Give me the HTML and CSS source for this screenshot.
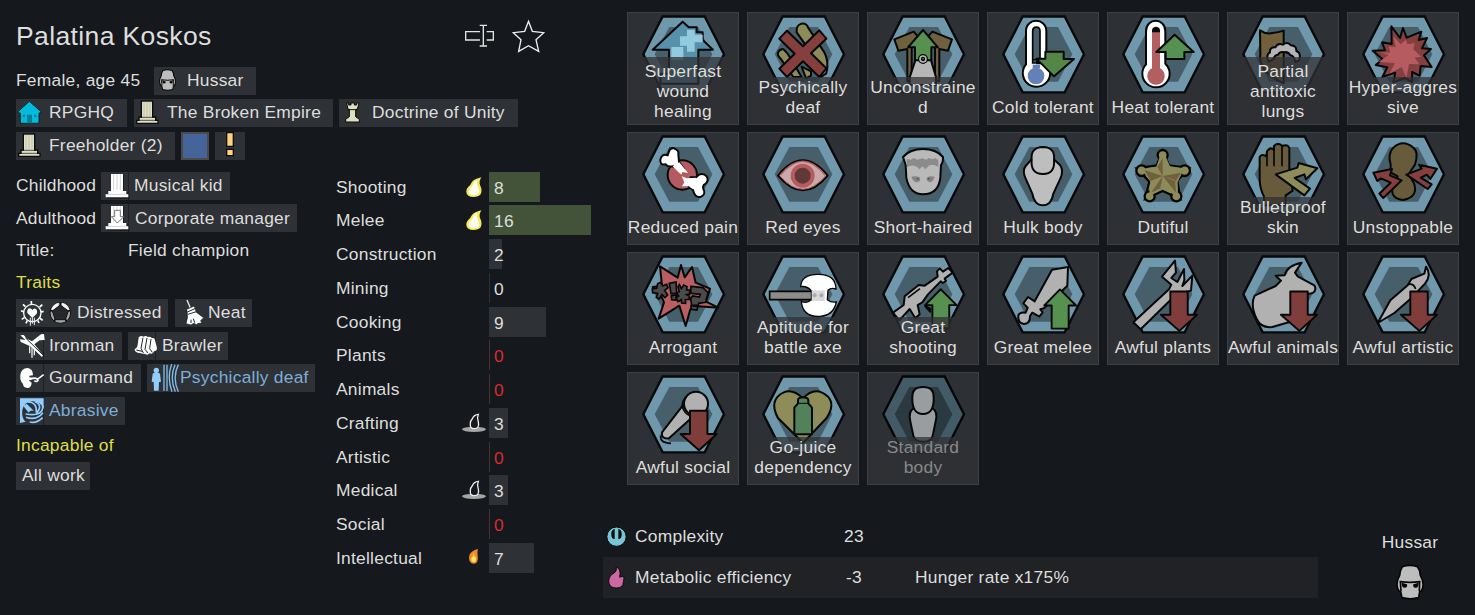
FILE: index.html
```html
<!DOCTYPE html>
<html lang="en">
<head>
<meta charset="utf-8">
<title>Palatina Koskos</title>
<link rel="stylesheet" href="styles.css">
</head>
<body>
<svg class="defs" width="0" height="0">
  <defs>
    <symbol id="hex" viewBox="0 0 336 339">
      <path fill="#6f98ac" stroke="#060809" stroke-width="7" d="M107 13.500H233L291 127L233 241H107L49 127Z"/>
      <path fill="#475f6a" d="M127 45H213L256 127L213 209H127L83 127Z"/>
    </symbol>
    <symbol id="down" viewBox="0 0 130 134"><path class="k" fill="#7f3d3b" d="M35 6H89V78H118L63 128L6 78H35Z"/></symbol>
    <symbol id="up" viewBox="0 0 110 134"><path class="k" fill="#569152" d="M55 6L105 56H82V128H29V56H6Z"/></symbol>
    <symbol id="flame" viewBox="390 21 87 90">
      <path fill="#f7e957" d="M454 37Q446 50 450 60Q458 76 452 88Q445 96 431 96Q409 95 409 80Q409 69 420 61Q427 42 454 37Z"/>
      <path fill="#fffdf0" d="M443 45Q438 54 444 65Q451 79 445 87Q432 94 420 88Q411 78 421 69Q429 62 431 53Q436 46 443 45Z"/>
    </symbol>
    <symbol id="apathy" viewBox="390 99 87 90">
      <ellipse cx="432" cy="163" rx="36" ry="8" fill="#a5a5a5"/>
      <path fill="#15191d" stroke="#eee" stroke-width="4" d="M445 118Q440 130 445 141Q449 161 433 161Q419 161 421 145Q421 137 427 131Q432 119 445 118Z"/>
    </symbol>
    <symbol id="pillar" viewBox="0 0 72 72">
      <path fill="#dfe0c4" stroke="#090a0b" stroke-width="4" d="M17 2H51V50H60V60H67V69H3V60H10V50H17Z"/>
      <path stroke="#b9baa3" stroke-width="2.500" d="M25 4V49M34 4V49M43 4V49"/>
      <path stroke="#090a0b" stroke-width="2" d="M13 51H57M8 60H62"/>
    </symbol>
    <symbol id="whitepillar" viewBox="0 0 76 78">
      <path fill="#151515" opacity=".7" d="M20 3H57V56H68V64H74V77H6V66H14V56H20Z"/>
      <path fill="#fff" d="M18 3H54V54H64V64H70V73H2V64H10V54H18Z"/>
      <path stroke="#bbb" stroke-width="2" d="M26 4V50M36 4V50M46 4V50M10 64H64"/>
    </symbol>
    <symbol id="helmet" viewBox="168 163 90 108">
      <path fill="#bdbdbd" stroke="#060606" stroke-width="5" d="M190 171Q213 163 235 171Q243 180 244 197Q259 223 247 244L242 246L239 264Q214 271 189 264L185 246L180 244Q167 223 182 197Q183 181 190 171Z"/>
      <path fill="none" stroke="#060606" stroke-width="5" d="M186 244L184 216Q213 220 242 216L241 244"/>
      <path fill="#060606" d="M188 219L204 224Q207 235 195 234Q188 232 188 219ZM239 219L223 224Q220 235 232 234Q239 232 239 219Z"/>
    </symbol>
  </defs>
</svg>

<main class="sheet">
  <section class="bio">
    <header class="name-row">
      <h1>Palatina Koskos</h1>
      <svg class="rename" viewBox="402 66 93 75"><g fill="none" stroke="#e4e4e0" stroke-width="4"><path d="M450 92H407V117H450M470 92H490V117H470M460 73V135M449 73H471M449 135H471"/></g></svg>
      <svg class="star" viewBox="543 57 105 105"><path fill="none" stroke="#eee" stroke-width="4" d="M595.500 64L607 94L641 98L618 119L626 154L595.500 137L566 154L573 119L550 98L584 94Z"/></svg>
    </header>

    <div class="row"><span class="plain age">Female, age 45</span>
      <span class="chip w102"><svg class="ic33" viewBox="0 0 99 84"><use href="#helmet" x="13" y="6" width="55" height="66"/></svg>Hussar</span></div>
    <div class="row r2">
      <span class="chip w111"><svg class="ic33" viewBox="48 297 99 84">
        <path fill="#00bbdb" stroke="#06282e" stroke-width="3" d="M88 304L122 334V339H117V370H61V339H55V334Z"/><path fill="#087f94" d="M81 344H96V370H81ZM68 344H75V351H68ZM102 344H109V351H102Z"/></svg>RPGHQ</span>
      <span class="chip w199 gap1"><svg class="ic33" viewBox="0 0 99 84"><use href="#pillar" x="5" y="4" width="72" height="72"/></svg>The Broken Empire</span>
      <span class="chip w179"><svg class="ic33" viewBox="27 297 99 84"><path fill="#dfe0c0" stroke="#090a0b" stroke-width="3" d="M50 309H56V315H63V309H73V315H80V309H87L82 328H77V350L88 358V366H47V358L58 350V328H54Z"/><path stroke="#111" stroke-width="3" d="M53 329H83"/></svg>Doctrine of Unity</span>
    </div>
    <div class="row r3">
      <span class="chip w159"><svg class="ic33" viewBox="0 0 99 84"><use href="#pillar" x="5" y="4" width="72" height="72"/></svg>Freeholder (2)</span>
      <span class="swatch"></span>
      <span class="chip w30"><svg class="ic30" viewBox="645 396 90 84"><path fill="#ffd27b" stroke="#0c0c0c" stroke-width="4" d="M680 398H700V439H680ZM680 448H700V467H680Z"/></svg></span>
    </div>

    <div class="columns">
      <div class="left">
        <div class="row story"><span class="plain key">Childhood</span><span class="chip w129 seam"><svg class="ic33" viewBox="303 21 99 84"><use href="#whitepillar" x="315" y="24" width="76" height="78"/></svg>Musical kid</span></div>
        <div class="row story low"><span class="plain key">Adulthood</span><span class="chip w196 seam"><svg class="ic34" viewBox="303 117 102 84"><use href="#whitepillar" x="315" y="120" width="76" height="78"/><path fill="#fff" stroke="#777" stroke-width="3" d="M344 136H361V155H371L352 174L334 155H344Z"/></svg>Corporate manager</span></div>
        <div class="title-row"><span>Title:</span><span>Field champion</span></div>
        <h2>Traits</h2>
        <div class="row traits">
          <span class="chip w152"><svg class="ic61" viewBox="48 402 183 84">
            <circle cx="97" cy="444" r="26" fill="none" stroke="#fff" stroke-width="4"/>
            <path stroke="#fff" stroke-width="5" d="M94 418V408M76 425L69 418M71 440L63 437M73 458L65 463M119 426L127 419M123 441L131 439M119 459L128 466M82 466L78 475M113 466L117 474"/>
            <path fill="#fff" d="M97 459L82 444Q80 430 90 430Q96 431 97 436Q99 430 106 431Q114 435 110 446Z"/><path stroke="#eee" stroke-width="3" d="M91 458V482M97 458V476M103 458V480"/>
            <circle cx="181" cy="444" r="31" fill="#a2a2a2" stroke="#111" stroke-width="3"/>
            <path fill="#f4f4f4" d="M153 434Q159 416 177 413L175 424L160 437ZM185 413Q203 416 209 434L202 437L187 424Z"/>
            <path fill="#25282c" stroke="#111" stroke-width="3" d="M181 420L205 438L196 464H166L157 438Z"/>
            <path stroke="#111" stroke-width="5" d="M181 412V422M204 438L211 436M196 463L200 469M166 463L162 469M158 438L151 436"/></svg>Distressed</span>
          <span class="chip w77"><svg class="ic33" viewBox="525 402 99 84"><path stroke="#eee" stroke-width="4" d="M561 405L571 429"/><path fill="#fff" stroke="#16181a" stroke-width="2" d="M560 433L583 423L589 442L611 458L602 467L606 475L594 475L590 479L581 475L573 480L558 476Q566 456 560 433Z"/><path stroke="#24272b" stroke-width="3" d="M562 441L587 430M564 448L589 440M573 474V464M584 473L580 461"/></svg>Neat</span>
        </div>
        <div class="row r3">
          <span class="chip w106 seam"><svg class="ic33" viewBox="48 21 99 84"><path fill="#fff" d="M61 31L71 30L82 42L96 49L123 28L132 27L134 45L119 46L103 58L129 90L126 96L91 64L62 51L60 43L76 45Z"/><path stroke="#25282c" stroke-width="3" d="M76 38L129 90"/><path stroke="#eee" stroke-width="4" d="M89 64V85M96 67V98M103 72V91"/></svg>Ironman</span>
          <span class="chip w100 seam"><svg class="ic34" viewBox="384 21 102 84"><path fill="#fff" d="M416 37Q424 30 430 35Q438 30 443 36Q450 33 455 39Q465 37 465 46L471 69Q470 79 462 79Q459 89 449 85Q443 92 435 87L417 84Q404 82 404 72Q411 70 413 59Z"/><path fill="none" stroke="#24272b" stroke-width="3" d="M429 38L423 70L430 84M441 39L435 73L444 84M453 42L449 71L457 82M409 75L426 79"/></svg>Brawler</span>
        </div>
        <div class="row r2">
          <span class="chip w125 seam"><svg class="ic33" viewBox="48 117 99 84"><path fill="#fff" d="M83 129Q99 131 99 151L88 152V157L101 158Q96 166 86 166L95 173Q94 189 82 189Q69 187 69 177Q59 168 61 150Q63 130 83 129Z"/><path fill="none" stroke="#fff" stroke-width="5" d="M96 161Q109 157 112 163L131 149M103 167Q111 173 115 164"/></svg>Gourmand</span>
          <span class="chip w168 blue"><svg class="ic33" viewBox="441 117 99 84"><g fill="#91cdff"><circle cx="469" cy="136" r="8"/><path d="M458 146Q469 138 480 146L483 170L477 171L476 197H462L461 171L455 170Z"/></g><path fill="none" stroke="#83bce9" stroke-width="4" d="M492 119V198M501 119V198M515 117Q500 158 516 200M525 119Q508 158 526 200M535 119Q516 158 535 200"/></svg>Psychically deaf</span>
        </div>
        <div class="row r3"><span class="chip w109 blue seam"><svg class="ic33" viewBox="48 216 99 84"><path fill="#91cdff" d="M60 220H131V252Q123 231 98 229Q73 230 67 254Q64 280 77 290L60 294Z"/><path fill="#91cdff" d="M70 243L80 236L102 258Q92 253 86 263Z"/><path fill="none" stroke="#91cdff" stroke-width="5" d="M84 231Q111 231 109 262M105 230Q131 241 108 266M128 240Q132 276 77 267M129 263Q109 288 78 277M128 278Q110 296 89 291"/></svg>Abrasive</span></div>
        <h2 class="incap">Incapable of</h2>
        <div class="row work"><span class="chip w74 textonly">All work</span></div>
      </div>

      <div class="skills">
        <div class="skill"><span>Shooting</span><svg viewBox="0 0 87 90"><use href="#flame" width="87" height="90"/></svg><b class="bar green" style="width:51px">8</b></div>
        <div class="skill"><span>Melee</span><svg viewBox="0 0 87 90"><use href="#flame" width="87" height="90"/></svg><b class="bar green" style="width:102px">16</b></div>
        <div class="skill"><span>Construction</span><i></i><b class="bar" style="width:13px">2</b></div>
        <div class="skill"><span>Mining</span><i></i><b class="bar" style="width:1px">0</b></div>
        <div class="skill"><span>Cooking</span><i></i><b class="bar" style="width:57px">9</b></div>
        <div class="skill"><span>Plants</span><i></i><b class="bar none" style="width:1px">0</b></div>
        <div class="skill"><span>Animals</span><i></i><b class="bar none" style="width:1px">0</b></div>
        <div class="skill"><span>Crafting</span><svg viewBox="0 0 87 90"><use href="#apathy" width="87" height="90"/></svg><b class="bar" style="width:19px">3</b></div>
        <div class="skill"><span>Artistic</span><i></i><b class="bar none" style="width:1px">0</b></div>
        <div class="skill"><span>Medical</span><svg viewBox="0 0 87 90"><use href="#apathy" width="87" height="90"/></svg><b class="bar" style="width:19px">3</b></div>
        <div class="skill"><span>Social</span><i></i><b class="bar none" style="width:1px">0</b></div>
        <div class="skill"><span>Intellectual</span><svg viewBox="390 504 87 90"><path fill="#f08a2c" d="M444 522Q441 530 443 542Q446 566 431 566Q417 566 417 547Q417 536 425 531Q434 523 444 522Z"/><path fill="#ffe65c" d="M432 533Q431 543 438 549Q439 562 431 562Q423 561 424 550Q430 544 432 533Z"/></svg><b class="bar" style="width:45px">7</b></div>
      </div>
    </div>
  </section>

  <section class="xeno">
    <div class="genes">
      <div class="gene tall"><svg viewBox="21 21 336 339"><use href="#hex" x="21" y="21" width="336" height="339"/>
        <path class="k" fill="#5690ab" d="M188 50L206 67H230V82H248V105L279 134H235V236H121V206H147V134H98Z"/><path fill="#93cade" d="M201 74H224V89H248V112H224V140H201V122H180V94H201ZM154 126H190V165H154Z"/></svg><p>Superfast<br>wound<br>healing</p></div>

      <div class="gene"><svg viewBox="381 21 336 339"><use href="#hex" x="381" y="21" width="336" height="339"/>
        <g class="k" fill="#8d8b59"><path d="M544 56Q559 53 564 67L613 142Q628 170 619 205L603 216L577 148L530 82Q527 62 544 56Z"/><path d="M491 133Q479 130 474 143Q471 151 482 161L520 216H545L502 145Z"/><path d="M545 185L573 199V212L558 220Z"/></g>
        <path class="k" fill="#853f3e" d="M501 77L549 124L598 76L619 101L573 145L619 190L598 216L549 169L501 216L478 191L524 146L478 101Z"/></svg><p>Psychically<br>deaf</p></div>

      <div class="gene"><svg viewBox="741 21 336 339"><use href="#hex" x="741" y="21" width="336" height="339"/>
        <path class="k" fill="#70603e" d="M823 103L881 80L894 94L875 130V229H862V132L835 137ZM996 103L937 80L924 94L945 130V229H958V132L984 137Z"/>
        <path class="k" fill="#569152" d="M909 75L954 127H934V172H885V127H864Z"/><path class="k" fill="#b6b6b6" d="M886 166H933L948 217V240H869V217Z"/><circle cx="909" cy="162" r="9" fill="none" stroke="#050505" stroke-width="12"/><circle cx="909" cy="162" r="9" fill="none" stroke="#b6b6b6" stroke-width="5"/></svg><p>Unconstraine<br>d</p></div>

      <div class="gene"><svg viewBox="21 21 336 339"><use href="#hex" x="21" y="21" width="336" height="339"/>
        <path fill="#fff" stroke="#050505" stroke-width="6" d="M138 178V79C138 37 199 37 199 79V176A41 41 0 1 1 138 178Z"/><path fill="#475f6a" stroke="#050505" stroke-width="5" d="M158 174V79C158 62 180 62 180 79V174Z"/><path d="M168 161H181L198 178H168Z"/><circle cx="168" cy="213" r="25" fill="#6380b8"/><path d="M158 179H180V190H158Z" fill="#6380b8"/><path d="M159 164H186" stroke="#050505" stroke-width="4"/>
        <path class="k" fill="#548747" d="M196 140H251V162H282L222 214L169 161H196Z"/></svg><p>Cold tolerant</p></div>

      <div class="gene"><svg viewBox="381 21 336 339"><use href="#hex" x="381" y="21" width="336" height="339"/>
        <path fill="#fff" stroke="#050505" stroke-width="6" d="M498 178V79C498 37 556 37 556 79V176A41 41 0 1 1 498 178Z"/><path fill="#b35e61" d="M516 81H540V190A26 26 0 1 1 516 190Z"/><path fill="#090909" d="M516 82V76C516 62 540 62 540 76V82Z"/><path class="k" fill="#569152" d="M584 89L641 141H613V162H557V141H529Z"/></svg><p>Heat tolerant</p></div>

      <div class="gene tall"><svg viewBox="741 21 336 339"><use href="#hex" x="741" y="21" width="336" height="339"/>
        <path class="k" fill="#70603e" d="M840 76Q859 89 877 84Q895 82 911 77V235Q882 223 858 199Q837 179 841 147Z"/>
        <path class="k" fill="#b5b5b5" d="M866 170Q856 150 870 142Q868 126 886 127Q893 112 909 119Q922 108 933 121Q950 122 949 138Q965 144 957 166L946 171Q942 152 931 151Q924 139 912 142Q900 139 894 149Q883 150 881 162Z"/></svg><p>Partial<br>antitoxic<br>lungs</p></div>

      <div class="gene"><svg viewBox="1101 21 336 339"><use href="#hex" x="1101" y="21" width="336" height="339"/>
        <path class="k" fill="#853f3e" d="M1234 64L1260 99L1269 69L1280 98L1324 80L1316 105L1341 99L1326 130L1353 132L1332 151L1355 186L1322 183L1319 212L1296 201L1297 232L1274 219L1240 232L1246 203L1207 216L1222 187L1187 180L1208 163L1178 137L1215 136L1206 112L1235 117Z"/><path fill="#b65c60" d="M1239 93L1262 118L1278 104L1282 118L1304 114L1300 133L1324 155L1304 158L1318 178L1287 177L1279 218L1265 186L1228 206L1245 174L1196 171L1226 150L1199 142L1231 143L1226 124L1248 127Z"/></svg><p>Hyper-aggres<br>sive</p></div>

      <div class="gene"><svg viewBox="21 381 336 339"><use href="#hex" x="21" y="381" width="336" height="339"/>
        <circle cx="187" cy="510" r="44" fill="#b35b61" stroke="#080808" stroke-width="6"/><path fill="#fff" stroke="#080808" stroke-width="6" d="M147 439Q151 427 162 430Q178 436 175 448L177 471L190 489L158 484Q144 487 137 478Q119 481 121 464Q125 445 143 451Z"/><path fill="#fff" stroke="#080808" stroke-width="6" d="M237 509Q251 504 260 514Q268 527 255 538Q247 540 250 552Q259 567 243 575Q224 580 219 555L205 543L212 517L228 517Z"/>
        <path fill="#fff" d="M158 484L178 472L204 504L187 501L184 509L172 498ZM228 518L219 553L206 544H186L193 532L185 514L200 520Z"/></svg><p>Reduced pain</p></div>

      <div class="gene"><svg viewBox="381 381 336 339"><use href="#hex" x="381" y="381" width="336" height="339"/>
        <path class="k" fill="#c8aaaa" d="M474 512Q549 420 623 512Q549 600 474 512Z"/><path fill="none" stroke="#b65d60" stroke-width="5" d="M481 510Q549 427 616 511"/><path fill="none" stroke="#b65d60" stroke-width="3" d="M481 514Q549 592 616 513"/><circle cx="548" cy="512" r="30" fill="#603838" stroke="#b65b60" stroke-width="12"/></svg><p>Red eyes</p></div>

      <div class="gene"><svg viewBox="741 381 336 339"><use href="#hex" x="741" y="381" width="336" height="339"/>
        <path class="k" fill="#b9b9b9" d="M849 456Q870 432 909 432Q948 432 969 456Q969 474 963 480L961 518Q956 568 909 568Q868 568 859 518L857 480Z"/><path fill="#8b8b8b" d="M860 462L873 464L881 459L892 464L907 460L918 464L927 459L937 463L946 459L955 466V486Q939 475 928 481L916 493L907 484L898 493Q884 475 861 486Z"/><path fill="#848484" d="M874 515Q888 511 899 517Q905 530 889 532Q879 529 874 515ZM944 515Q930 511 922 517Q915 529 930 532Q940 529 944 515Z"/><circle cx="893" cy="521" r="3" fill="#555"/><circle cx="926" cy="521" r="3" fill="#555"/></svg><p>Short-haired</p></div>

      <div class="gene"><svg viewBox="21 381 336 339"><use href="#hex" x="21" y="381" width="336" height="339"/>
        <path class="k" fill="#bebebe" d="M154 464L137 483Q126 496 137 521L157 566Q163 601 189 601Q214 601 220 566L241 521Q252 497 240 480L223 464Z"/><path class="k" fill="#bebebe" d="M155 464Q151 427 189 426Q226 427 222 464Q226 507 189 507Q151 507 155 464Z"/></svg><p>Hulk body</p></div>

      <div class="gene"><svg viewBox="381 381 336 339"><use href="#hex" x="381" y="381" width="336" height="339"/>
        <g fill="#8d8b59" stroke="#050505" stroke-width="7"><path d="M548 438L567 481L627 489L592 527L601 582L548 558L495 582L508 530L470 490L530 481Z"/><circle cx="548" cy="450" r="15"/><circle cx="485" cy="497" r="16"/><circle cx="614" cy="497" r="16"/><circle cx="509" cy="574" r="15"/><circle cx="589" cy="574" r="15"/></g><path fill="#8d8b59" d="M541 450H555L570 484L613 490L593 531L594 575L548 551L507 575L511 529L483 492L529 485Z"/><path fill="#70603e" d="M548 460V513L532 486ZM494 496L548 513L512 528ZM548 513L513 563L541 550ZM548 513L588 563L585 525ZM548 513L603 503L587 529Z"/></svg><p>Dutiful</p></div>

      <div class="gene"><svg viewBox="741 381 336 339"><use href="#hex" x="741" y="381" width="336" height="339"/>
        <path class="k" fill="#675b3b" d="M852 601V575Q839 549 839 522V456Q845 445 859 454L861 439Q869 425 882 435V423Q894 409 907 423Q924 416 928 430V498L938 557L917 571V601Z"/><path fill="none" stroke="#080808" stroke-width="5" d="M861 446V484M882 431V484M906 424V484"/><path class="k" fill="#8e8c5a" d="M887 508L952 488L956 474L1012 490L978 523L973 508L944 519L990 551L973 571Z"/></svg><p>Bulletproof<br>skin</p></div>

      <div class="gene"><svg viewBox="1101 381 336 339"><use href="#hex" x="1101" y="381" width="336" height="339"/>
        <path class="k" fill="#675b3b" d="M1240 428Q1269 402 1300 428Q1317 441 1305 479L1286 507L1302 535Q1316 576 1270 585Q1229 582 1238 542L1253 514L1232 502V479Q1222 447 1240 428Z"/><path class="k" fill="#853f3e" d="M1180 503L1236 492L1230 511L1265 526L1210 579L1198 566L1232 533L1203 520L1192 528Z"/><path class="k" fill="#853f3e" d="M1279 509L1325 491L1317 479L1371 491L1351 522L1341 509L1322 518L1355 538L1343 552Z"/></svg><p>Unstoppable</p></div>

      <div class="gene"><svg viewBox="21 21 336 339"><use href="#hex" x="21" y="21" width="336" height="339"/>
        <path class="k" fill="#b95e61" d="M120 64L173 98L183 60L194 97L216 66L227 113L270 131L258 170L295 188L235 184L211 193L197 243L178 182L116 221L132 172L120 145L98 126L126 122Z"/><g fill="#4b4b4b" stroke="#070707" stroke-width="5"><path d="M113 116L122 112L128 122L140 118L144 128L134 136L143 150L135 158L126 149L117 162L109 157L113 145L98 143L97 132L110 130ZM148 115L168 111L170 145L153 146ZM154 152L170 150L168 165L155 164Z"/><path d="M178 119L184 131L191 120L201 125L200 135H209V147L200 149L208 153V163L196 164L197 175L185 174L184 164L174 170L168 158L176 153L170 145L178 139L174 125ZM213 124L249 128L264 143L257 172L236 175L235 181L215 180L212 160L218 153L238 156L241 148L212 145ZM213 182L233 184L231 195L213 193Z"/></g></svg><p>Arrogant</p></div>

      <div class="gene"><svg viewBox="381 21 336 339"><use href="#hex" x="381" y="21" width="336" height="339"/>
        <path fill="#fff" stroke="#060606" stroke-width="4" d="M542 125Q544 87 596 88Q647 88 648 132Q633 127 624 136L622 164Q633 173 649 171Q641 211 601 214Q548 217 544 169Q563 177 573 164V136Q560 122 542 125Z"/><path fill="#8e8c8b" stroke="#050505" stroke-width="5" d="M449 139H575V164H449Z"/><path fill="#d9d9d9" d="M575 136H614V168H575Z"/><circle cx="584" cy="151" r="6" fill="#aaa"/><circle cx="604" cy="151" r="6" fill="#aaa"/></svg><p>Aptitude for<br>battle axe</p></div>

      <div class="gene"><svg viewBox="741 21 336 339"><use href="#hex" x="741" y="21" width="336" height="339"/>
        <path class="k" fill="#b1b1b1" d="M819 203L851 180L854 154L896 120L914 122L953 95L951 79L959 70L969 80L985 69L998 83L974 101L978 108L968 114L962 109L924 148L907 172L893 180L899 208L886 220L869 192L838 226Z"/><path d="M864 158L900 131" stroke="#080808" stroke-width="5"/><path class="k" d="M916 184L930 190V200Z" fill="#b1b1b1"/><use href="#up" x="907" y="127" width="110" height="128"/></svg><p>Great<br>shooting</p></div>

      <div class="gene"><svg viewBox="21 21 336 339"><use href="#hex" x="21" y="21" width="336" height="339"/>
        <path class="k" fill="#b1b1b1" d="M216 74L264 66L262 122L192 190L181 193L188 202L178 215L157 203L150 213Q151 236 132 237Q112 234 115 211Q119 200 137 203L143 188L130 175L144 156L164 169Z"/><use href="#up" x="187" y="125" width="106" height="134"/></svg><p>Great melee</p></div>

      <div class="gene"><svg viewBox="381 21 336 339"><use href="#hex" x="381" y="21" width="336" height="339"/>
        <path class="k" fill="#b1b1b1" d="M460 232L567 133L574 119L546 95L585 47L588 83L574 99L592 111L612 72L613 105L607 123L637 92L633 137L590 147L482 253Z"/><use href="#down" x="537" y="133" width="126" height="131"/></svg><p>Awful plants</p></div>

      <div class="gene"><svg viewBox="741 21 336 339"><use href="#hex" x="741" y="21" width="336" height="339"/>
        <path class="k" fill="#b1b1b1" d="M824 152L887 123L903 107L887 92L914 91Q921 61 965 53L945 83L953 94L1003 121Q1011 136 998 144L970 151L955 210L929 231L877 246Q843 250 830 222Q810 180 824 152Z"/><use href="#down" x="897" y="133" width="126" height="131"/></svg><p>Awful animals</p></div>

      <div class="gene"><svg viewBox="1101 21 336 339"><use href="#hex" x="1101" y="21" width="336" height="339"/>
        <path class="k" fill="#b1b1b1" d="M1193 234L1231 166L1283 121L1294 102L1333 86L1338 65Q1356 90 1335 116L1315 137L1304 151L1243 204Z"/><path d="M1286 118Q1301 115 1307 132" fill="none" stroke="#070707" stroke-width="5"/><use href="#down" x="1257" y="133" width="126" height="131"/></svg><p>Awful artistic</p></div>

      <div class="gene"><svg viewBox="21 381 336 339"><use href="#hex" x="21" y="381" width="336" height="339"/>
        <path class="k" fill="#b1b1b1" d="M188 482L126 562Q122 583 147 580L220 514Z"/><circle class="k" cx="228" cy="476" r="36" fill="#b1b1b1"/><path d="M198 456Q181 475 189 491Q201 516 218 510" fill="none" stroke="#070707" stroke-width="5"/><path d="M122 572Q119 594 153 595" fill="none" stroke="#070707" stroke-width="5"/><use href="#down" x="176" y="491" width="126" height="131"/></svg><p>Awful social</p></div>

      <div class="gene"><svg viewBox="381 381 336 339"><use href="#hex" x="381" y="381" width="336" height="339"/>
        <path class="k" fill="#8e8c59" d="M549 594L474 519Q452 479 473 455Q508 420 549 460Q586 420 624 455Q646 479 620 519Z"/><path class="k" fill="#52815a" d="M534 465Q535 457 549 457Q564 457 565 465V475L576 488V568H523V488L534 475Z"/><path stroke="#070707" stroke-width="3" d="M535 475H564"/></svg><p>Go-juice<br>dependency</p></div>

      <div class="gene off"><svg viewBox="741 381 336 339"><g class="dim"><use href="#hex" x="741" y="381" width="336" height="339"/></g>
        <path class="k" fill="#999d9f" d="M882 489Q864 499 871 529L880 572Q885 590 909 590Q934 590 938 572L947 529Q955 500 936 489Z"/><path class="k" fill="#999d9f" d="M877 456Q876 426 909 426Q942 426 941 456Q943 507 909 507Q875 507 877 456Z"/></svg><p>Standard<br>body</p></div>
    </div>

    <footer class="summary">
      <div class="stats">
        <div class="stat"><svg viewBox="33 107 63 67"><circle cx="64.500" cy="141" r="29" fill="#79c5d6" stroke="#090a0b" stroke-width="3"/><path fill="#0c1113" d="M59 117Q47 121 49 137Q50 149 59 148ZM70 117Q82 121 80 137Q79 149 70 148Z"/></svg><span>Complexity</span><span class="val">23</span><span></span></div>
        <div class="stat shaded"><svg viewBox="33 228 63 72"><path fill="#cc67a2" stroke="#080808" stroke-width="3" d="M64 230L74 240Q78 251 74 263L86 260Q90 264 86 277Q86 297 64 297Q40 297 40 274Q42 257 57 250Q66 245 64 230Z"/></svg><span>Metabolic efficiency</span><span class="val">-3</span><span>Hunger rate x175%</span></div>
      </div>
      <div class="type"><span>Hussar</span><svg viewBox="168 163 90 108"><use href="#helmet" x="168" y="163" width="90" height="108"/></svg></div>
    </footer>
  </section>
</main>
</body>
</html>
```
FILE: styles.css
```css
* { box-sizing: border-box; }
body {
  margin: 0;
  background: #15191d;
  color: #dededc;
  font: 17.4px/20px "Liberation Sans", Arial, sans-serif;
  letter-spacing: .25px;
}
svg { display: block; flex: none; }
.defs { position: absolute; }
.k { stroke: #060707; stroke-width: 6; stroke-linejoin: round; }
h1, h2, p { margin: 0; font-weight: normal; }
h2 { font-size: 17.4px; line-height: 20px; color: #dede45; }

.sheet { display: flex; width: 1475px; height: 615px; overflow: hidden; }
.bio { width: 603px; flex: none; padding-left: 16px; }
.name-row { display: flex; align-items: center; height: 67px; padding-top: 5px; }
h1 { width: 448px; font-size: 26.5px; line-height: 32px; letter-spacing: .38px; }
.rename { width: 31px; height: 25px; margin-top: -2px; }
.star { width: 35px; height: 35px; margin-left: 16px; }

.row { display: flex; height: 28px; margin-top: 4px; gap: 6px; white-space: nowrap; }
.name-row + .row { margin-top: 0; }
.row.r3 { margin-top: 5px; }
.plain { line-height: 26px; }
.age { width: 132px; }
.chip { display: flex; flex: none; height: 28px; line-height: 26px; background: #2e3135; }
.low .plain, .low .chip { line-height: 28px; }
.gap1 { margin-left: 1px; }
.blue { color: #7daed8; }
.textonly { padding-left: 6px; }
.seam { background: linear-gradient(90deg, #2e3135 27px, #1d2024 27px, #1d2024 28px, #2e3135 28px); }
.ic30 { width: 30px; height: 28px; }
.ic33 { width: 33px; height: 28px; }
.ic34 { width: 34px; height: 28px; }
.ic61 { width: 61px; height: 28px; }
.w30 { width: 30px; } .w74 { width: 74px; } .w77 { width: 77px; }
.w100 { width: 100px; } .w102 { width: 102px; } .w106 { width: 106px; }
.w109 { width: 109px; } .w111 { width: 111px; } .w125 { width: 125px; }
.w129 { width: 129px; } .w152 { width: 152px; } .w159 { width: 159px; }
.w168 { width: 168px; } .w179 { width: 179px; } .w196 { width: 196px; } .w199 { width: 199px; }
.swatch { width: 28px; height: 28px; background: #44649a; border: 2px solid #4b4b4d; }

.columns { display: flex; }
.left { width: 320px; padding-top: 12px; }
.left .row:first-child { margin-top: 0; }
.row.story { gap: 0; }
.key { width: 85px; letter-spacing: .2px; }
.title-row { display: grid; grid-template-columns: 112px 1fr; margin: 8px 0 12px; }
.left .traits { margin-top: 7px; gap: 7px; }
.incap { margin-top: 10px; }
.left .work { margin-top: 7px; }

.skills { padding-top: 11.6px; }
.skill { display: grid; grid-template-columns: 124px 29px 110px; height: 33.75px; line-height: 30px; }
.skill svg { width: 29px; height: 30px; }
.bar { height: 30px; text-indent: 5px; font-weight: normal; line-height: 32px; background: #2e3135; white-space: nowrap; }
.green { background: #435339; }
.none { color: #d92c2f; background: #4a3035; }

.xeno { width: 872px; }
.genes { display: grid; grid-template-columns: repeat(7, 112px); grid-auto-rows: 113px; gap: 7px 8px; padding: 12px 0 0 24px; }
.gene { position: relative; background: #2d3035; box-shadow: inset 0 0 0 1px #3d4043; }
.gene svg { width: 112px; height: 113px; }
.gene p {
  position: absolute; inset: auto 0 1px 0;
  padding-bottom: 7px;
  background: rgba(48, 49, 51, .74);
  box-shadow: inset 1px 0 #3d4043, inset -1px 0 #3d4043;
  text-align: center; white-space: nowrap;
}
.tall p { padding: 4px 0 3px; }
.off p { color: #87888a; }
.dim { filter: brightness(.6); }

.summary { display: flex; padding-top: 31px; }
.stats { width: 715px; flex: none; }
.stat { display: grid; grid-template-columns: 32px 179px 101px 1fr; align-items: center; height: 41px; padding-bottom: 1px; }
.stat svg { width: 21px; height: 23px; margin-left: 3px; }
.val { width: 80px; text-align: center; }
.shaded { background: #202226; }
.type { display: flex; flex-direction: column; align-items: center; width: 157px; padding: 16px 0 0 27px; }
.type svg { width: 30px; height: 36px; margin-top: 12px; }
```
